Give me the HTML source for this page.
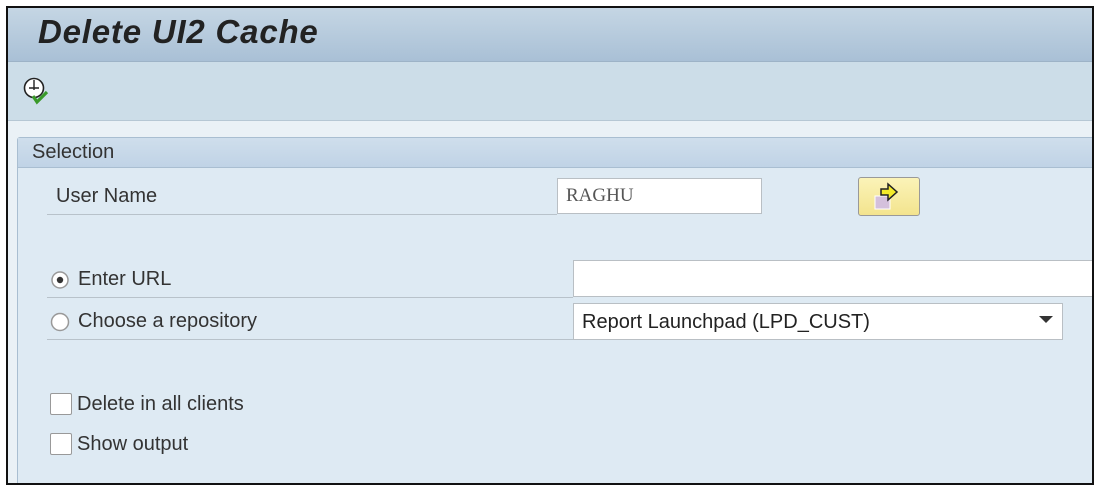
<!DOCTYPE html>
<html><head><style>
html,body{margin:0;width:1098px;height:493px;overflow:hidden}
body{background:#fff;position:relative;font-family:"Liberation Sans",sans-serif;color:#222}
.a{position:absolute}
.lbl{font-size:20px;color:#333}
.ul{height:1px;background:#b8c2ca}
.inp{background:#fff;border:1px solid #b9bfc4;box-sizing:border-box}
</style></head><body>
<div class="a" style="left:6px;top:6px;width:1088px;height:479px;border:2px solid #111;background:#deeaf3;overflow:hidden;box-sizing:border-box">
 <div class="a" style="left:0;top:0;width:1090px;height:53px;background:linear-gradient(#c5d6e4,#a9c0d6);border-bottom:1px solid #9db3c7"></div>
 <div class="a" style="left:30px;top:5px;font-size:33px;font-weight:bold;font-style:italic;color:#222;letter-spacing:0.8px">Delete UI2 Cache</div>
 <div class="a" style="left:0;top:54px;width:1090px;height:58px;background:#ccdde8;border-bottom:1px solid #b6c7d4"></div>
 <svg class="a" style="left:14px;top:67px" width="34" height="32" viewBox="0 0 34 32"><circle cx="12" cy="13" r="9.5" fill="#fff" stroke="#222" stroke-width="1.6"/><path d="M12 5v10M7 13h10" stroke="#222" stroke-width="1.4"/><path d="M11 21l4 6 10-10" stroke="#3a9a2a" stroke-width="3.2" fill="none"/></svg>
 <div class="a" style="left:0;top:113px;width:1090px;height:400px;background:#eaf1f6"></div>
 <div class="a" style="left:9px;top:129px;width:1090px;height:360px;background:#deeaf3;border:1px solid #a9bed1;border-radius:3px 0 0 0"></div>
 <div class="a" style="left:10px;top:130px;width:1090px;height:29px;background:linear-gradient(#cfdeec,#c0d3e6);border-bottom:1px solid #a9bed1"></div>
 <div class="a lbl" style="left:24px;top:133px">Selection</div>
</div>
<div class="a lbl" style="left:56px;top:185px">User Name</div>
<div class="a ul" style="left:47px;top:214px;width:510px"></div>
<div class="a inp" style="left:557px;top:178px;width:205px;height:36px;font-family:'Liberation Serif',serif;font-size:19px;color:#555;padding:6px 8px">RAGHU</div>
<div class="a" style="left:858px;top:177px;width:62px;height:39px;box-sizing:border-box;border:1px solid #999;border-radius:3px;background:linear-gradient(#fbf3b8,#f3e48e)">
 <svg class="a" style="left:14px;top:4px" width="30" height="30" viewBox="0 0 30 30"><rect x="2" y="14" width="15" height="13" fill="#d4c0dc" stroke="#fff"/><path d="M8 7h7V2l9 8-9 8v-5H8z" fill="#f3ea2a" stroke="#222" stroke-width="1.5"/></svg>
</div>
<svg class="a" style="left:50px;top:270px" width="20" height="20"><circle cx="10" cy="10" r="8" fill="#fff" stroke="#999" stroke-width="1.5"/><circle cx="10" cy="10" r="3.2" fill="#333"/></svg>
<div class="a lbl" style="left:78px;top:268px">Enter URL</div>
<div class="a ul" style="left:47px;top:297px;width:526px"></div>
<div class="a inp" style="left:573px;top:260px;width:519px;height:37px;border-right:none"></div>
<svg class="a" style="left:50px;top:312px" width="20" height="20"><circle cx="10" cy="10" r="8.5" fill="#fff" stroke="#999" stroke-width="1.5"/></svg>
<div class="a lbl" style="left:78px;top:310px">Choose a repository</div>
<div class="a ul" style="left:47px;top:339px;width:526px"></div>
<div class="a inp" style="left:573px;top:303px;width:490px;height:37px;font-size:20px;color:#222;padding:7px 8px">Report Launchpad (LPD_CUST)</div>
<svg class="a" style="left:1038px;top:315px" width="16" height="10"><path d="M1 1h14l-7 7z" fill="#333"/></svg>
<div class="a inp" style="left:50px;top:393px;width:22px;height:22px;border-color:#999;border-radius:2px"></div>
<div class="a lbl" style="left:77px;top:393px">Delete in all clients</div>
<div class="a inp" style="left:50px;top:433px;width:22px;height:22px;border-color:#999;border-radius:2px"></div>
<div class="a lbl" style="left:77px;top:433px">Show output</div>
</body></html>
